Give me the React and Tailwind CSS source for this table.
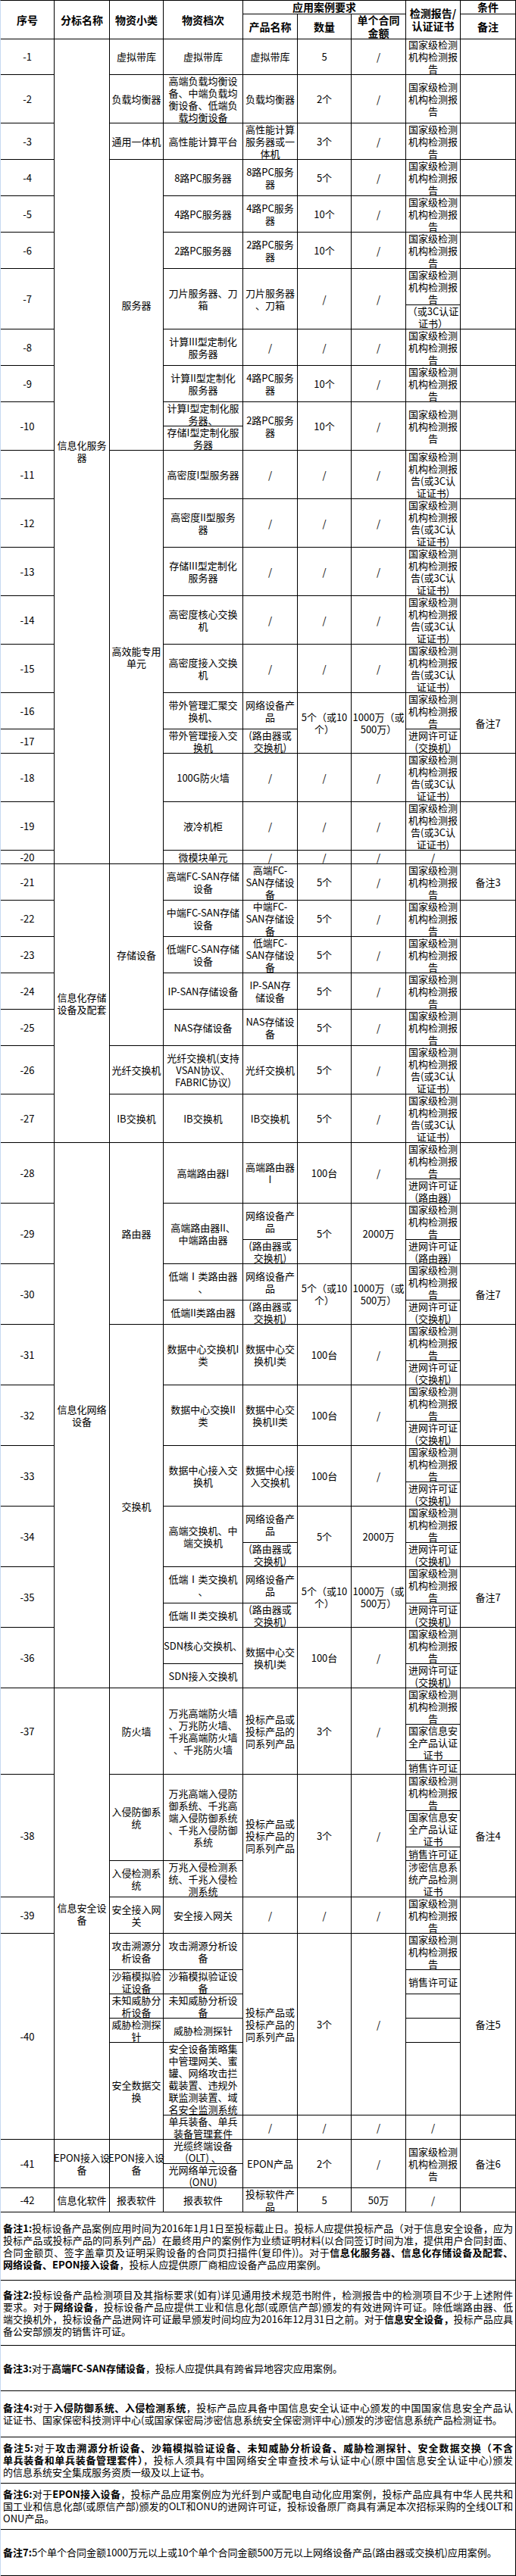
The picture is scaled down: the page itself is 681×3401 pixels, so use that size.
import React from 'react';

const RS = {
  1: 'row-span-1', 2: 'row-span-2', 3: 'row-span-3', 4: 'row-span-4', 5: 'row-span-5',
  6: 'row-span-6', 7: 'row-span-7', 9: 'row-span-9', 10: 'row-span-10', 12: 'row-span-12',
  14: 'row-span-14', 18: 'row-span-18', 22: 'row-span-22',
};

const G = '国家级检测\n机构检测报\n告';
const G3 = '国家级检测\n机构检测报\n告(或3C认\n证证书)';
const JW = '进网许可证\n(交换机)';
const JL = '进网许可证\n(路由器)';
const WL = '网络设备产\n品';
const LJ = '(路由器或\n交换机)';
const TB = '投标产品或\n投标产品的\n同系列产品';
const X = '/';
const N10 = '5个（或10\n个）';
const M10 = '1000万（或\n500万）';

const body = [
  [['-1'], ['信息化服务\n器', 22], ['虚拟带库'], ['虚拟带库'], ['虚拟带库'], ['5'], [X], [G], ['']],
  [['-2'], ['负载均衡器'], ['高端负载均衡设\n备、中端负载均\n衡设备、低端负\n载均衡设备'], ['负载均衡器'], ['2个'], [X], [G], ['']],
  [['-3'], ['通用一体机'], ['高性能计算平台'], ['高性能计算\n服务器或一\n体机'], ['3个'], [X], [G], ['']],
  [['-4'], ['服务器', 9], ['8路PC服务器'], ['8路PC服务\n器'], ['5个'], [X], [G], ['']],
  [['-5'], ['4路PC服务器'], ['4路PC服务\n器'], ['10个'], [X], [G], ['']],
  [['-6'], ['2路PC服务器'], ['2路PC服务\n器'], ['10个'], [X], [G], ['']],
  [['-7', 2], ['刀片服务器、刀\n箱', 2], ['刀片服务器\n、刀箱', 2], [X, 2], [X, 2], [G], ['', 2]],
  [['（或3C认证\n证书）']],
  [['-8'], ['计算III型定制化\n服务器'], [X], [X], [X], [G], ['']],
  [['-9'], ['计算II型定制化\n服务器'], ['4路PC服务\n器'], ['10个'], [X], [G], ['']],
  [['-10', 2], ['计算I型定制化服\n务器、'], ['2路PC服务\n器', 2], ['10个', 2], [X, 2], [G, 2], ['', 2]],
  [['存储I型定制化服\n务器']],
  [['-11'], ['高效能专用\n单元', 10], ['高密度I型服务器'], [X], [X], [X], [G3], ['']],
  [['-12'], ['高密度II型服务\n器'], [X], [X], [X], [G3], ['']],
  [['-13'], ['存储III型定制化\n服务器'], [X], [X], [X], [G3], ['']],
  [['-14'], ['高密度核心交换\n机'], [X], [X], [X], [G3], ['']],
  [['-15'], ['高密度接入交换\n机'], [X], [X], [X], [G3], ['']],
  [['-16'], ['带外管理汇聚交\n换机、'], [WL], [N10, 2], [M10, 2], [G], ['备注7', 2]],
  [['-17'], ['带外管理接入交\n换机'], [LJ], [JW]],
  [['-18'], ['100G防火墙'], [X], [X], [X], [G3], ['']],
  [['-19'], ['液冷机柜'], [X], [X], [X], [G3], ['']],
  [['-20'], ['微模块单元'], [X], [X], [X], [X], ['']],
  [['-21'], ['信息化存储\n设备及配套', 7], ['存储设备', 5], ['高端FC-SAN存储\n设备'], ['高端FC-\nSAN存储设\n备'], ['5个'], [X], [G], ['备注3']],
  [['-22'], ['中端FC-SAN存储\n设备'], ['中端FC-\nSAN存储设\n备'], ['5个'], [X], [G], ['']],
  [['-23'], ['低端FC-SAN存储\n设备'], ['低端FC-\nSAN存储设\n备'], ['5个'], [X], [G], ['']],
  [['-24'], ['IP-SAN存储设备'], ['IP-SAN存\n储设备'], ['5个'], [X], [G], ['']],
  [['-25'], ['NAS存储设备'], ['NAS存储设\n备'], ['5个'], [X], [G], ['']],
  [['-26'], ['光纤交换机'], ['光纤交换机(支持\nVSAN协议、\nFABRIC协议)'], ['光纤交换机'], ['5个'], [X], [G3], ['']],
  [['-27'], ['IB交换机'], ['IB交换机'], ['IB交换机'], ['5个'], [X], [G3], ['']],
  [['-28', 2], ['信息化网络\n设备', 18], ['路由器', 6], ['高端路由器I', 2], ['高端路由器\nI', 2], ['100台', 2], [X, 2], [G], ['', 2]],
  [[JL]],
  [['-29', 2], ['高端路由器II、\n中端路由器', 2], [WL], ['5个', 2], ['2000万', 2], [G], ['', 2]],
  [[LJ], [JL]],
  [['-30', 2], ['低端Ⅰ类路由器\n、'], [WL], [N10, 2], [M10, 2], [G], ['备注7', 2]],
  [['低端II类路由器'], [LJ], [JW]],
  [['-31', 2], ['交换机', 12], ['数据中心交换机I\n类', 2], ['数据中心交\n换机I类', 2], ['100台', 2], [X, 2], [G], ['', 2]],
  [[JW]],
  [['-32', 2], ['数据中心交换II\n类', 2], ['数据中心交\n换机II类', 2], ['100台', 2], [X, 2], [G], ['', 2]],
  [[JW]],
  [['-33', 2], ['数据中心接入交\n换机', 2], ['数据中心接\n入交换机', 2], ['100台', 2], [X, 2], [G], ['', 2]],
  [[JW]],
  [['-34', 2], ['高端交换机、中\n端交换机', 2], [WL], ['5个', 2], ['2000万', 2], [G], ['', 2]],
  [[LJ], [JW]],
  [['-35', 2], ['低端Ⅰ类交换机\n、'], [WL], [N10, 2], [M10, 2], [G], ['备注7', 2]],
  [['低端Ⅱ类交换机'], [LJ], [JW]],
  [['-36', 2], ['SDN核心交换机、'], ['数据中心交\n换机I类', 2], ['100台', 2], [X, 2], [G], ['', 2]],
  [['SDN接入交换机'], [JW]],
  [['-37', 3], ['信息安全设\n备', 14], ['防火墙', 3], ['万兆高端防火墙\n、万兆防火墙、\n千兆高端防火墙\n、千兆防火墙', 3], [TB, 3], ['3个', 3], [X, 3], [G], ['', 3]],
  [['国家信息安\n全产品认证\n证书']],
  [['销售许可证']],
  [['-38', 4], ['入侵防御系\n统', 3], ['万兆高端入侵防\n御系统、千兆高\n端入侵防御系统\n、千兆入侵防御\n系统', 3], [TB, 4], ['3个', 4], [X, 4], [G], ['备注4', 4]],
  [['国家信息安\n全产品认证\n证书']],
  [['销售许可证']],
  [['入侵检测系\n统'], ['万兆入侵检测系\n统、千兆入侵检\n测系统'], ['涉密信息系\n统产品检测\n证书']],
  [['-39'], ['安全接入网\n关'], ['安全接入网关'], [X], [X], [X], [G], ['']],
  [['-40', 6], ['攻击溯源分\n析设备'], ['攻击溯源分析设\n备'], [TB, 5], ['3个', 5], [X, 5], [G], ['备注5', 5]],
  [['沙箱模拟验\n证设备'], ['沙箱模拟验证设\n备'], ['销售许可证']],
  [['未知威胁分\n析设备'], ['未知威胁分析设\n备'], ['']],
  [['威胁检测探\n针'], ['威胁检测探针'], ['']],
  [['安全数据交\n换', 2], ['安全设备策略集\n中管理网关、蜜\n罐、网络攻击拦\n截装置、违规外\n联监测装置、域\n名安全监测系统'], ['']],
  [['单兵装备、单兵\n装备管理套件'], [X], [X], [X], [X], ['']],
  [['-41', 2], ['EPON接入设\n备', 2], ['EPON接入设\n备', 2], ['光缆终端设备\n(OLT) 、'], ['EPON产品', 2], ['2个', 2], [X, 2], [G, 2], ['备注6', 2]],
  [['光网络单元设备\n(ONU)']],
  [['-42'], ['信息化软件'], ['报表软件'], ['报表软件'], ['投标软件产\n品'], ['5'], ['50万'], [X], ['']],
];

function Cell({ rs = 1, wide = false, head = false, children }) {
  const base = 'flex items-center justify-center border-r border-b border-black text-center whitespace-pre';
  const txt = head ? 'text-[14px] font-bold leading-[17px]' : 'text-[13px] leading-[16px]';
  return <div className={`${RS[rs]} ${wide ? 'col-span-3' : ''} ${base} ${txt}`}>{children}</div>;
}

const notes = [
  {
    h: 'h-[90px]',
    lines: [
      [['备注1:', 1], ['投标设备产品案例应用时间为2016年1月1日至投标截止日。投标人应提供投标产品（对于信息安全设备，应为']],
      [['投标产品或投标产品的同系列产品）在最终用户的案例作为业绩证明材料(以合同签订时间为准，提供用户合同封面、']],
      [['合同金额页、签字盖章页及证明采购设备的合同页扫描件(复印件))。对于'], ['信息化服务器、信息化存储设备及配套、', 1]],
      [['网络设备、EPON接入设备', 1], ['，投标人应提供原厂商相应设备产品应用案例。']],
    ],
  },
  {
    h: 'h-[86px]',
    lines: [
      [['备注2:', 1], ['投标设备产品检测项目及其指标要求(如有)详见通用技术规范书附件，检测报告中的检测项目不少于上述附件']],
      [['要求。对于'], ['网络设备', 1], ['，投标设备产品应提供工业和信息化部(或原信产部)颁发的有效进网许可证。除低端路由器、低']],
      [['端交换机外，投标设备产品进网许可证最早颁发时间均应为2016年12月31日之前。对于'], ['信息安全设备，', 1], ['投标产品应具']],
      [['备公安部颁发的销售许可证。']],
    ],
  },
  {
    h: 'h-[60px]',
    lines: [[['备注3:', 1], ['对于'], ['高端FC-SAN存储设备', 1], ['，投标人应提供具有跨省异地容灾应用案例。']]],
  },
  {
    h: 'h-[61px]',
    lines: [
      [['备注4:', 1], ['对于'], ['入侵防御系统、入侵检测系统', 1], ['，投标产品应具备中国信息安全认证中心颁发的中国国家信息安全产品认']],
      [['证证书、国家保密科技测评中心(或国家保密局涉密信息系统安全保密测评中心)颁发的涉密信息系统产品检测证书。']],
    ],
  },
  {
    h: 'h-[61px]',
    lines: [
      [['备注5:', 1], ['对于'], ['攻击溯源分析设备、沙箱模拟验证设备、未知威胁分析设备、威胁检测探针、安全数据交换（不含', 1]],
      [['单兵装备和单兵装备管理套件）', 1], ['，投标人须具有中国网络安全审查技术与认证中心(原中国信息安全认证中心)颁发']],
      [['的信息系统安全集成服务资质一级及以上证书。']],
    ],
  },
  {
    h: 'h-[61px]',
    lines: [
      [['备注6:', 1], ['对于'], ['EPON接入设备', 1], ['，投标产品应用案例应为光纤到户或配电自动化应用案例，投标产品应具有中华人民共和']],
      [['国工业和信息化部(或原信产部)颁发的OLT和ONU的进网许可证，投标设备原厂商具有满足本次招标采购的全线OLT和']],
      [['ONU产品。']],
    ],
  },
  {
    h: 'h-[61px]',
    lines: [[['备注7:', 1], ['5个单个合同金额1000万元以上或10个单个合同金额500万元以上网络设备产品(路由器或交换机)应用案例。']]],
  },
];

export default function App() {
  return (
    <div className="w-[681px] bg-white text-black font-['Noto_Sans_CJK_SC','Noto_Sans',sans-serif]">
      <div className="grid grid-cols-[71px_73px_71px_105px_72px_71px_72px_72px_73px] grid-rows-[18px_33px_47px_64px_48px_48px_48px_48px_48px_32px_48px_48px_32px_32px_64px_64px_64px_64px_64px_48px_32px_64px_64px_18px_48px_48px_48px_48px_48px_64px_64px_48px_32px_48px_32px_48px_32px_48px_32px_48px_32px_48px_32px_48px_32px_48px_32px_48px_32px_48px_48px_18px_48px_48px_18px_48px_48px_48px_32px_32px_32px_96px_32px_32px_32px_32px] border-t border-black border-l border-l-[#c6d9f0]">
        <Cell rs={2} head>序号</Cell>
        <Cell rs={2} head>分标名称</Cell>
        <Cell rs={2} head>物资小类</Cell>
        <Cell rs={2} head>物资档次</Cell>
        <Cell wide head>应用案例要求</Cell>
        <Cell rs={2} head>{'检测报告/\n认证证书'}</Cell>
        <Cell head>条件</Cell>
        <Cell head>产品名称</Cell>
        <Cell head>数量</Cell>
        <Cell head>{'单个合同\n金额'}</Cell>
        <Cell head>备注</Cell>
        {body.map((row, ri) =>
          row.map(([t, rs], ci) => (
            <Cell key={`${ri}-${ci}`} rs={rs || 1}>
              {t}
            </Cell>
          ))
        )}
      </div>
      <div className="border-l border-l-[#c6d9f0]">
        {notes.map((n, ni) => (
          <div key={ni} className={`${n.h} flex flex-col justify-center border-r border-b border-black px-[3px] text-[13px] leading-[16px]`}>
            {n.lines.map((line, li) => {
              const last = li === n.lines.length - 1;
              return (
                <div key={li} className={`whitespace-nowrap ${last ? 'text-left' : 'text-justify [text-align-last:justify]'}`}>
                  {line.map(([t, b], si) => (
                    <span key={si} className={b ? 'font-bold' : ''}>
                      {t}
                    </span>
                  ))}
                </div>
              );
            })}
          </div>
        ))}
      </div>
    </div>
  );
}
